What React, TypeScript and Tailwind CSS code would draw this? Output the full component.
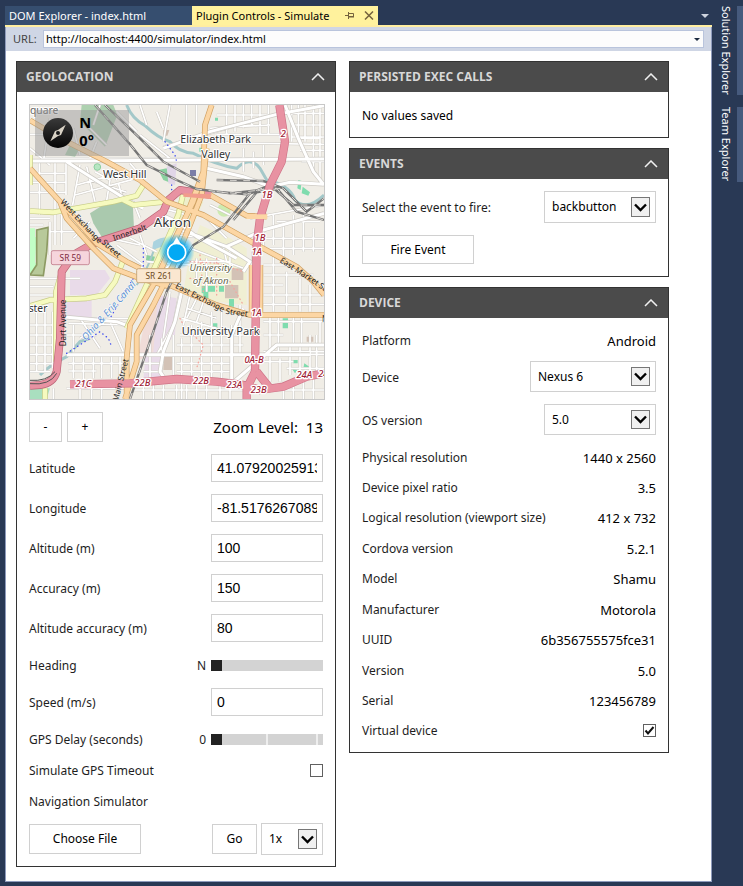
import type { ReactNode } from "react";

/* ---------- map ---------- */

const minorStreets = [
  // north west
  "M0 88H40 M0 130L60 180 M60 40L40 170 M130 70L150 150 M170 60L230 120 M200 110L180 160 M40 160H882 M0 170H180 M28 170V330 M75 170V420 M108 170V270 M0 205H110 M0 232H110 M0 262H110",
  "M150 180L128 300 M170 185L195 290 M140 240L230 215 M135 270L320 220 M195 200L240 225L228 300 M265 235L280 290 M180 225L290 262 M245 165L260 225 M300 175L330 210",
  "M210 0L190 60 M260 20L320 80 M330 0L350 60 M380 20L400 70 M330 90L420 160 M420 0L400 110 M470 0V110 M500 0V60",
  // north east
  "M400 125L740 28 M590 0V90 M615 0V80 M640 0V70 M665 0V64 M690 0V90 M715 0V90 M560 88H770 M600 66L720 60 M540 70L670 60 M500 112L882 118 M560 30H720",
  "M785 0V110 M805 0V110 M825 0V110 M850 0V116 M870 0V116 M785 25H882 M785 60H882 M785 96H882 M800 100L882 96 M810 136H882 M815 170H882 M850 120V200 M870 120V240 M640 130V200 M670 140V190 M700 120V180",
  // west centre
  "M0 340H60 M0 360H40 M95 330V420 M60 350V450 M130 400L180 350 M60 380H160 M240 400L330 420 M300 400L380 440 M330 390L350 450 M260 420L340 480 M300 470L360 500 M310 290L330 340",
  "M0 520H150 M0 545H70 M0 570H80 M0 660H80 M0 690H75 M0 720H70 M0 748H75 M0 776H70 M20 620V800 M45 600V800 M68 620V790 M0 800H60",
  "M110 640H300 M115 655L290 660 M130 660V740 M150 640L210 730 M110 690H200 M150 700L240 640 M240 650L280 740 M115 748H882 M130 748V820 M160 748V830 M190 748V820 M215 748V820 M245 748V820 M270 748V820 M115 775H280 M115 798H200",
  "M110 850H300 M150 835V882 M185 850V882 M215 850V882 M70 850V882",
  // downtown
  "M400 310L470 330 M380 330L480 390 M440 390L540 400 M350 470L480 480 M400 500L470 420 M440 480L450 560 M510 400L580 425 M540 300L600 330 M580 425L590 470 M520 330L590 400 M480 430L640 490 M470 470L600 470 M500 460V540 M530 460V560 M600 430V480",
  "M420 560L400 700 M450 560L430 660L380 750 M480 570L460 660 M500 580L470 640 M520 590L500 650 M470 610L560 640 M455 640L560 670 M450 690H640 M440 720H640 M440 775H600 M440 800H600 M395 700V830 M430 690V830 M455 700V882 M485 660V820 M515 650V820 M545 620V820 M575 600V820 M605 660V820 M630 600V750",
  // east
  "M660 340L882 300 M700 380V430 M730 330V420 M760 350V460 M790 330V450 M820 330V440 M850 370V440 M700 400H882 M720 430H882 M740 350H870 M700 480H780 M700 510H850 M700 540H760 M730 450V620 M770 500V620 M810 520V620 M840 540V620 M700 570H882 M700 598H882 M580 425L720 370",
  "M700 650H882 M700 690H760 M720 630V740 M745 630V740 M790 630V720 M815 630V720 M840 690V820 M860 690V820 M700 740H882 M700 770H790 M720 740V830 M750 760V830 M780 720V810 M810 720V800 M770 790H882 M730 855H882 M760 830V882 M790 830V882 M820 820V882 M850 820V882 M870 650V720",
  "M310 855H640 M340 840V882 M370 840V882 M400 840V882 M440 840V882 M470 840V882 M500 840V882 M530 840V882 M570 840V882 M600 840V882 M340 775H400 M340 800H390 M360 690V830",
];

const whiteRoads = [
  "M0 168H150L882 162",
  "M110 170L300 290L340 310",
  "M400 130L540 80L740 28L882 2",
  "M765 0L805 100L850 200L882 240",
  "M530 190L640 215L720 245L780 232L882 238",
  "M480 385L590 425L660 470L640 500",
  "M395 330L440 350L500 395L620 460",
  "M95 635L260 650L300 665",
  "M110 749H840",
  "M590 425L700 375L882 325",
  "M600 840L740 720H882",
  "M455 560L435 650L400 740L390 800L410 830",
  "M640 610L605 690V830",
];

const yellowRoads = [
  "M0 318L70 322L250 290L320 272L340 240",
  "M280 285L310 300L410 290",
  "M0 603L60 585L170 580L225 570L255 530L280 465",
  "M78 770V560L95 500L130 450",
  "M460 265L445 330L400 430L290 670",
  "M0 240V150",
  "M45 882V850",
];

const orangeRoads = [
  "M0 46L100 105L230 170L330 225L410 290L520 330L690 425L800 485L850 530L882 570",
  "M0 190L90 290L110 340L190 430L250 490L330 520L420 545",
  "M100 300L200 415L290 470L330 490",
  "M545 0L525 60L520 200L490 290L440 390L370 540L300 660L290 760V882",
  "M530 130L515 270L480 360L430 480L370 600L320 690V770L285 882",
  "M520 200L470 330L390 500",
  "M540 270L650 332L710 335",
  "M330 500L430 545L560 600L660 630H882",
  "M665 480V630 M691 480V630",
];

const rails = [
  "M195 0L300 118L350 180L440 225L500 252L600 265L740 250L800 320L882 345",
  "M225 0L330 100L400 170L510 230",
  "M560 225L700 228L760 250L830 320L882 280",
  "M560 260L650 268L720 240L790 300L882 300",
  "M740 240L660 265L580 365L490 420L440 500L410 560L370 680L300 882",
  "M750 250L680 262L610 345",
];

const pinkRoads = [
  "M748 0L765 110L755 170L720 240L690 340L680 420L675 800",
  "M545 270L450 255L415 285L400 320L330 370L190 415L130 450L95 500L90 700L80 800Q70 835 30 840L0 842",
  "M120 838L300 835L440 822L560 830L640 840L690 855L760 845L830 815L882 805",
  "M675 800L650 850V882 M680 800L720 850",
];

const haloText = { paintOrder: "stroke", stroke: "#ffffff", strokeWidth: 6, strokeLinejoin: "round" } as const;

function Roads({ paths, casing, fill, width }: { paths: string[]; casing: string; fill: string; width: number }) {
  const d = paths.join(" ");
  return (
    <g fill="none" strokeLinejoin="round">
      <path d={d} stroke={casing} strokeWidth={width + 4} />
      <path d={d} stroke={fill} strokeWidth={width} />
    </g>
  );
}

function Exit({ x, y, children }: { x: number; y: number; children: string }) {
  return (
    <text x={x} y={y} fontSize="28" fontStyle="italic" fontWeight="500" textAnchor="middle" fill="#a01c36" {...haloText} strokeWidth={8}>
      {children}
    </text>
  );
}

function Place({ x, y, size, children }: { x: number; y: number; size: number; children: string }) {
  return (
    <text x={x} y={y} fontSize={size} textAnchor="middle" fill="#333333" {...haloText}>
      {children}
    </text>
  );
}

function MapView() {
  return (
    <svg viewBox="0 0 882 882" className="block h-full w-full font-['Noto_Sans','Open_Sans',sans-serif]" role="img" aria-label="Map of Akron">
      <defs>
        <radialGradient id="glow">
          <stop offset="0.5" stopColor="#03a9f4" stopOpacity="0.95" />
          <stop offset="1" stopColor="#03a9f4" stopOpacity="0" />
        </radialGradient>
        <linearGradient id="dial" x1="0" y1="0" x2="0" y2="1">
          <stop offset="0" stopColor="#3a3a3a" />
          <stop offset="1" stopColor="#050505" />
        </linearGradient>
      </defs>
      <rect width="882" height="882" fill="#f0ede6" />

      {/* land use */}
      <path d="M120 495L225 495L240 520L200 570L120 570Z M110 585H185V640H110Z M385 570L440 580L435 690L390 740V830H340L350 700Z" fill="#e9dbe9" />
      <path d="M350 620L385 560L370 740L320 770Z" fill="#f0dcd8" />
      <path d="M510 360L600 400L650 430L650 600L560 590L460 560L480 440Z" fill="#f0efd3" />
      <path d="M450 270L520 290L480 380L420 380Z M380 420L440 450L400 510L340 500Z" fill="#eeeecb" />
      <path d="M180 325L235 290L308 292L312 370L215 395L190 355Z" fill="#aac9ae" />
      <path d="M155 0H250L262 30L225 125L150 50Z M120 120L150 130L135 155L105 150Z" fill="#aed1b0" />
      <path d="M0 370H15V500H0Z M0 400L20 395L15 470L30 505H0Z" fill="#c2ffc6" />
      <path d="M20 375L55 367L50 440L40 512L0 510L20 480Z" fill="#b8c99a" stroke="#8d9a63" strokeWidth="5" />
      <path d="M385 195L410 190L425 235L400 225Z M350 450L375 455L368 475L348 465Z M425 270L445 260L440 280Z" fill="#8bd1a0" />
      <path d="M410 185L440 175L435 240L415 235Z" fill="#e1d6e8" />
      <path d="M370 410Q400 390 440 400L430 420Q390 420 365 440Z" fill="#aad3df" />
      <circle cx="582" cy="315" r="20" fill="#cdebb0" />
      <path d="M515 543H555V560H535V590H520V565H515Z M567 543H582V560H567Z M597 582H612V605H597Z M805 225L815 228L812 255L802 250Z M818 245L840 262L835 272L815 265Z M555 38H564V47H555Z M545 655H562V670H545Z M758 640H774V670H758Z M790 765H803V775H790Z M785 790L802 795L795 805Z M823 775L838 785L830 795L820 790Z M508 128H520V140H508Z" fill="#7fdcae" />
      <path d="M585 540H625V580H585Z M400 755H430V795H400Z M605 490H640V525H605Z M400 75L418 75L412 92H400Z M830 695H850V710H830Z M665 440H675V470H665Z" fill="#d3c2b6" />
      <path d="M480 195H498V213H480Z" fill="#7b7ea8" />
      <circle cx="202" cy="186" r="10" fill="#b7e6c2" stroke="#8ccf9e" strokeWidth="3" />
      <path d="M0 850H60L50 882H0Z" fill="#a9dfbf" />

      {/* water */}
      <g fill="none" stroke="#a3c8c9" strokeWidth="9">
        <path d="M290 0Q305 40 345 62Q385 100 420 110Q445 140 490 145Q560 180 620 190Q660 150 690 190L710 225Q780 240 795 285Q830 320 882 270" />
        <path d="M30 810Q60 780 110 755L150 710L180 700" />
        <path d="M370 440Q350 500 320 540" strokeWidth="6" />
      </g>

      {/* streets */}
      <g fill="none">
        <path d={minorStreets.join(" ")} stroke="#cbc8c2" strokeWidth="8" />
        <path d={minorStreets.join(" ")} stroke="#ffffff" strokeWidth="5" />
      </g>
      <Roads paths={whiteRoads} casing="#cdcac4" fill="#ffffff" width={9} />
      <g fill="none" strokeLinecap="round" strokeWidth="4">
        <path d="M405 110L435 150L440 170 M425 240L425 265 M340 430V490L310 520L240 640 M110 745L180 700L210 680L235 700L245 725" stroke="#3a49f0" strokeDasharray="1 12" />
        <path d="M480 470L560 475L640 500 M480 520L600 530L640 600 M510 450L520 560 M560 460L560 570 M450 640L460 660 M490 690L520 720L500 790" stroke="#f4a79f" strokeDasharray="2 10" />
      </g>
      <Roads paths={yellowRoads} casing="#c6cb86" fill="#f6fabf" width={13} />
      <Roads paths={[pinkRoads[1]]} casing="#bb6476" fill="#e892a2" width={20} />
      <Roads paths={orangeRoads} casing="#cfa062" fill="#fcd6a4" width={13} />
      <g fill="none">
        <path d={rails.join(" ")} stroke="#757575" strokeWidth="7" />
        <path d={rails.join(" ")} stroke="#dddad5" strokeWidth="3" strokeDasharray="20 20" />
      </g>
      <Roads paths={[pinkRoads[0], pinkRoads[2], pinkRoads[3]]} casing="#cf7488" fill="#e892a2" width={21} />
      <path d="M460 265L545 268L540 282L460 275Z" fill="#f19c8c" />
      <path d="M650 335H712" fill="none" stroke="#fcd6a4" strokeWidth="14" />
      <path d="M0 826Q50 830 75 800 M0 836Q60 842 80 805" fill="none" stroke="#555555" strokeWidth="3" />

      {/* labels */}
      <text x="0" y="26" fontSize="31" fill="#666666" {...haloText}>quare</text>
      <Place x={557} y={114} size={32}>Elizabeth Park</Place>
      <Place x={557} y={160} size={32}>Valley</Place>
      <Place x={284} y={220} size={32}>West Hill</Place>
      <Place x={427} y={366} size={40}>Akron</Place>
      <Place x={572} y={689} size={33}>University Park</Place>
      <text x="-4" y="622" fontSize="31" fill="#333333" {...haloText}>ster</text>
      <text x="876" y="652" fontSize="24" fill="#333333">N</text>
      <g fontStyle="italic" fontSize="29" textAnchor="middle" fill="#66664a" {...haloText}>
        <text x="542" y="498">University</text>
        <text x="542" y="538">of Akron</text>
      </g>
      <g fontSize="24" fill="#222222">
        <text transform="translate(90 292) rotate(47)">West Exchange</text>
        <text transform="translate(214 414) rotate(42)">Street</text>
        <text transform="translate(252 408) rotate(-19)">Innerbelt</text>
        <text transform="translate(434 548) rotate(27)">East Exchange</text>
        <text transform="translate(586 626) rotate(8)">Street</text>
        <text transform="translate(748 470) rotate(33)">East Market Str</text>
        <text transform="translate(108 724) rotate(-90)">Dart Avenue</text>
        <text transform="translate(264 890) rotate(-76)">Main Street</text>
      </g>
      <text transform="translate(168 708) rotate(-48)" fontSize="29" fontStyle="italic" fill="#5d92d0" {...haloText} strokeWidth={3}>Ohio &amp; Erie Canal</text>

      <Exit x={760} y={95}>2</Exit>
      <Exit x={711} y={279}>1B</Exit>
      <Exit x={690} y={407}>1B</Exit>
      <Exit x={680} y={449}>1A</Exit>
      <Exit x={679} y={632}>1A</Exit>
      <Exit x={672} y={773}>0A-B</Exit>
      <Exit x={160} y={845}>21C</Exit>
      <Exit x={337} y={843}>22B</Exit>
      <Exit x={513} y={836}>22B</Exit>
      <Exit x={613} y={850}>23A</Exit>
      <Exit x={686} y={864}>23B</Exit>
      <Exit x={823} y={819}>24A</Exit>
      <Exit x={880} y={815}>24</Exit>

      <rect x="64" y="437" width="114" height="42" rx="5" fill="#f6d5dc" stroke="#c98c99" strokeWidth="3" />
      <text x="121" y="467" fontSize="25" textAnchor="middle" fill="#7c2a3c">SR 59</text>
      <rect x="320" y="491" width="132" height="42" rx="5" fill="#fae7d0" stroke="#c9a97d" strokeWidth="3" />
      <text x="386" y="521" fontSize="25" textAnchor="middle" fill="#6b4a1c">SR 261</text>

      {/* position marker */}
      <circle cx="440" cy="440" r="54" fill="url(#glow)" />
      <path d="M440 396L452 416A28 28 0 1 1 428 416Z" fill="#ffffff" />
      <circle cx="440" cy="442" r="27" fill="#03a9f4" stroke="#ffffff" strokeWidth="5" />

      {/* compass */}
      <rect x="15" y="15" width="282" height="138" fill="#999999" fillOpacity="0.5" />
      <circle cx="84" cy="84" r="45" fill="url(#dial)" />
      <path d="M107 59L93 90L84 93L61 109L75 78L84 75Z" fill="#d9d2c5" />
      <circle cx="84" cy="84" r="6" fill="#1a1a1a" />
      <g fontWeight="700" fontSize="44" fill="#000000">
        <text x="148" y="68">N</text>
        <text x="148" y="122">0°</text>
      </g>
    </svg>
  );
}

/* ---------- controls ---------- */

function Panel({ title, children }: { title: string; children: ReactNode }) {
  return (
    <section className="border border-[#333333] bg-white">
      <header className="flex h-[30px] items-center justify-between bg-[#4b4b4b] pr-2.5 pl-[9px]">
        <h2 className="font-['Open_Sans','Noto_Sans',sans-serif] text-[12px] font-bold text-[#d8d8d8]">{title}</h2>
        <button type="button" aria-label={`Collapse ${title}`}>
          <svg width="14" height="8" viewBox="0 0 14 8" className="block" fill="none" stroke="#f0f0f0" strokeWidth="1.5">
            <path d="M1 7L7 1L13 7" />
          </svg>
        </button>
      </header>
      <div className="flex flex-col gap-3 p-3 [&_label]:pt-0.5">{children}</div>
    </section>
  );
}

const buttonBox = "border border-[#d0d0d0] bg-white text-[12px] text-black";

function TextField({ id, label, value }: { id: string; label: string; value: string }) {
  return (
    <div className="flex items-center justify-between">
      <label htmlFor={id}>{label}</label>
      <input
        id={id}
        type="text"
        defaultValue={value}
        className="h-7 w-28 border border-[#d0d0d0] bg-white px-[5px] font-['Liberation_Sans',Arial,sans-serif] text-[14px] text-black"
      />
    </div>
  );
}

function Select({ id, label, options, size }: { id: string; label?: string; options: string[]; size: string }) {
  return (
    <div className={`relative ${size}`}>
      <select id={id} aria-label={label} className="h-full w-full appearance-none border border-[#d0d0d0] bg-white pr-8 pl-[7px] text-[12px] text-black">
        {options.map((o) => (
          <option key={o}>{o}</option>
        ))}
      </select>
      <span className="pointer-events-none absolute inset-y-1.5 right-1.5 flex w-[19px] items-center justify-center border border-[#767676] bg-[#f0f0f0]">
        <svg width="13" height="9" viewBox="0 0 13 9" fill="none" stroke="#000000" strokeWidth="2.4">
          <path d="M1 1.5L6.500 7L12 1.500" />
        </svg>
      </span>
    </div>
  );
}

function Slider({ id, label, value, ticks }: { id: string; label: string; value: string; ticks?: boolean }) {
  return (
    <div className="flex h-[22px] items-center">
      <label htmlFor={id} className="flex-1">{label}</label>
      <output htmlFor={id} className="mr-[5px] pt-0.5">{value}</output>
      <input
        id={id}
        type="range"
        defaultValue={0}
        className={`h-[11px] w-28 appearance-none bg-[#d3d3d3] [&::-webkit-slider-thumb]:h-[11px] [&::-webkit-slider-thumb]:w-[11px] [&::-webkit-slider-thumb]:appearance-none [&::-webkit-slider-thumb]:bg-[#222222] ${
          ticks ? "bg-[linear-gradient(90deg,transparent_55px,#eeeeee_55px,#eeeeee_57px,transparent_57px,transparent_105px,#eeeeee_105px,#eeeeee_107px,transparent_107px)]" : ""
        }`}
      />
    </div>
  );
}

function CheckRow({ id, label, checked, height }: { id: string; label: string; checked?: boolean; height: string }) {
  return (
    <div className={`flex items-center justify-between ${height}`}>
      <label htmlFor={id}>{label}</label>
      <span className="relative flex">
        <input id={id} type="checkbox" defaultChecked={checked} className="peer size-[13px] appearance-none border border-[#606060] bg-white" />
        <svg viewBox="0 0 13 13" className="pointer-events-none absolute inset-0 hidden size-[13px] peer-checked:block" fill="none" stroke="#111111" strokeWidth="2">
          <path d="M2.500 6.500L5 9.500L10.500 3" />
        </svg>
      </span>
    </div>
  );
}

const deviceFacts = [
  ["Physical resolution", "1440 x 2560"],
  ["Device pixel ratio", "3.5"],
  ["Logical resolution (viewport size)", "412 x 732"],
  ["Cordova version", "5.2.1"],
  ["Model", "Shamu"],
  ["Manufacturer", "Motorola"],
  ["UUID", "6b356755575fce31"],
  ["Version", "5.0"],
  ["Serial", "123456789"],
];

function Fact({ name, value }: { name: string; value: string }) {
  return (
    <div className="flex h-[19px] items-center justify-between pt-0.5">
      <span>{name}</span>
      <span className="text-[13px] text-black">{value}</span>
    </div>
  );
}

/* ---------- page ---------- */

export default function App() {
  return (
    <div className="flex min-h-screen bg-[#293955] pb-1 pl-[5px] font-['Noto_Sans','Open_Sans',sans-serif] text-[12px] leading-[18px] text-[#1e1e1e]">
      <div className="flex min-w-0 flex-1 flex-col pt-1.5">
        <div className="flex h-[21px] items-stretch border-b-2 border-[#ffeea0] text-[11px]">
          <button type="button" className="w-[187px] bg-[#364e6f] pl-1 text-left text-white">DOM Explorer - index.html</button>
          <div className="flex w-[186px] items-center bg-[#fff29d] pr-1 pl-1 text-black">
            <button type="button" className="flex-1 text-left whitespace-nowrap">Plugin Controls - Simulate</button>
            <button type="button" aria-label="Pin tab" className="mr-2.5">
              <svg width="9" height="7" viewBox="0 0 9 7" className="block" fill="none" stroke="#75633d">
                <path d="M0 3.500H3 M3.500 0V7 M4 1.500H8.500V5 M4 5H9" />
                <path d="M4 4.500H9" />
              </svg>
            </button>
            <button type="button" aria-label="Close tab">
              <svg width="10" height="9" viewBox="0 0 10 9" className="block" fill="none" stroke="#75633d" strokeWidth="1.5">
                <path d="M1 0.500L9 8.500M9 0.500L1 8.500" />
              </svg>
            </button>
          </div>
          <button type="button" aria-label="Open documents" className="ml-auto pr-[3px]">
            <svg width="8" height="4" viewBox="0 0 8 4" className="block" fill="#ced4df">
              <path d="M0 0H8L4 4Z" />
            </svg>
          </button>
        </div>

        <div className="flex flex-1 flex-col border border-t-0 border-[#8e9bbc] bg-white">
          <div className="flex h-6 items-center bg-[#cfd6e5] px-[7px] text-[11px]">
            <label htmlFor="url" className="w-[30px] text-[#444444]">URL:</label>
            <div className="flex h-[18px] flex-1 items-center border border-[#b9c4dc] bg-[#fcfcfc]">
              <input id="url" type="text" defaultValue="http://localhost:4400/simulator/index.html" className="h-4 min-w-0 flex-1 bg-transparent px-0.5 text-black" />
              <button type="button" aria-label="Recent addresses" className="px-[3px]">
                <svg width="6" height="3" viewBox="0 0 6 3" className="block" fill="#1b293e">
                  <path d="M0 0H6L3 3Z" />
                </svg>
              </button>
            </div>
          </div>

          <main className="flex flex-wrap items-start gap-x-[13px] px-2.5 pt-2.5 pb-3">
            <div className="w-80">
              <Panel title="GEOLOCATION">
                <div className="aspect-square w-[296px] border border-[#c8c8c8]">
                  <MapView />
                </div>
                <div className="flex h-[30px] items-stretch gap-[5px]">
                  <button type="button" className={`w-[33px] ${buttonBox}`}>-</button>
                  <button type="button" className={`w-9 ${buttonBox}`}>+</button>
                  <span className="ml-auto self-center text-[15px] text-black">
                    Zoom Level: <output className="ml-1">13</output>
                  </span>
                </div>
                <TextField id="lat" label="Latitude" value="41.0792002591357" />
                <TextField id="lng" label="Longitude" value="-81.5176267089844" />
                <TextField id="alt" label="Altitude (m)" value="100" />
                <TextField id="acc" label="Accuracy (m)" value="150" />
                <TextField id="altacc" label="Altitude accuracy (m)" value="80" />
                <Slider id="heading" label="Heading" value="N" />
                <TextField id="speed" label="Speed (m/s)" value="0" />
                <Slider id="delay" label="GPS Delay (seconds)" value="0" ticks />
                <CheckRow id="timeout" label="Simulate GPS Timeout" height="h-4" />
                <div className="flex h-[22px] items-center pt-0.5">Navigation Simulator</div>
                <div className="flex h-[30px] items-center">
                  <button type="button" className={`h-[30px] w-28 ${buttonBox}`}>Choose File</button>
                  <button type="button" className={`mr-1 ml-auto h-[30px] w-[45px] ${buttonBox}`}>Go</button>
                  <Select id="rate" label="Playback speed" options={["1x", "2x", "4x"]} size="h-8 w-[62px]" />
                </div>
              </Panel>
            </div>

            <div className="flex w-80 flex-col gap-2.5">
              <Panel title="PERSISTED EXEC CALLS">
                <p className="pt-0.5 leading-[19px] text-black">No values saved</p>
              </Panel>
              <Panel title="EVENTS">
                <div className="flex items-center justify-between">
                  <label htmlFor="event">Select the event to fire:</label>
                  <Select id="event" options={["backbutton", "menubutton", "pause", "resume"]} size="h-8 w-28" />
                </div>
                <button type="button" className={`h-[29px] w-28 ${buttonBox}`}>Fire Event</button>
              </Panel>
              <Panel title="DEVICE">
                <Fact name="Platform" value="Android" />
                <div className="flex items-center justify-between">
                  <label htmlFor="device">Device</label>
                  <Select id="device" options={["Nexus 6", "Nexus 5"]} size="h-[31px] w-[126px]" />
                </div>
                <div className="flex items-center justify-between">
                  <label htmlFor="os">OS version</label>
                  <Select id="os" options={["5.0", "5.1"]} size="h-[31px] w-28" />
                </div>
                <div className="flex min-h-[293px] flex-col justify-between">
                  {deviceFacts.map(([name, value]) => (
                    <Fact key={name} name={name} value={value} />
                  ))}
                  <CheckRow id="virtual" label="Virtual device" checked height="h-[19px]" />
                </div>
              </Panel>
            </div>
          </main>
        </div>
      </div>

      <nav className="flex w-[31px] flex-col items-end gap-3 pt-1.5 text-[11px] text-white">
        <button type="button" className="h-[89px] border-r-[6px] border-[#465a7d] pr-0.5 text-start whitespace-nowrap [writing-mode:vertical-rl]">Solution Explorer</button>
        <button type="button" className="h-[75px] border-r-[6px] border-[#465a7d] pr-0.5 text-start whitespace-nowrap [writing-mode:vertical-rl]">Team Explorer</button>
      </nav>
    </div>
  );
}
